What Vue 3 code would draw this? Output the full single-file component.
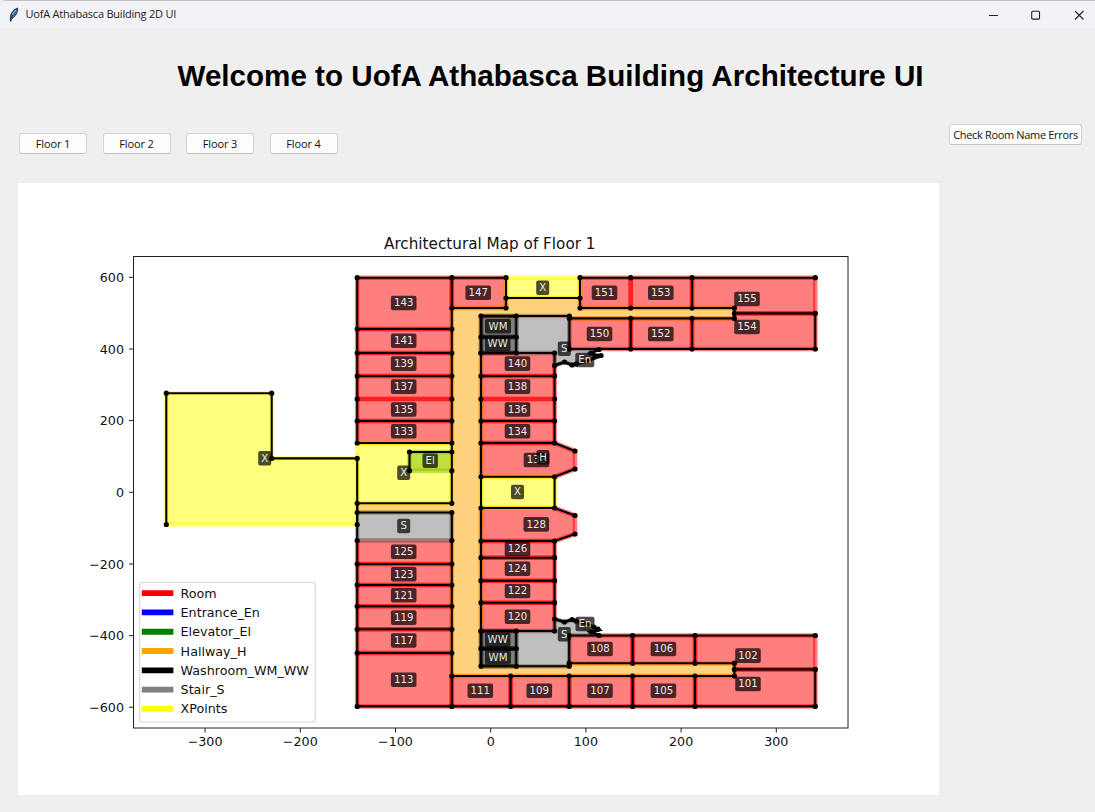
<script setup>
const floors = ['Floor 1', 'Floor 2', 'Floor 3', 'Floor 4']
const rect = (x1, y1, x2, y2) => `${x1},${y1} ${x2},${y1} ${x2},${y2} ${x1},${y2}`
const L = 357.2, M = 451.8, A = 481, B = 554.6

const stack = (x1, x2, ys) => ys.slice(1).map((y, i) => rect(x1, ys[i], x2, y))
const row = (y1, y2, xs) => xs.slice(1).map((x, i) => rect(xs[i], y1, x, y2))

const rooms = [
  ...stack(L, M, [277.7, 329, 353, 376, 399, 421, 443]),
  ...stack(L, M, [540.5, 564, 585, 606.3, 629.3, 653, 706.4]),
  ...stack(A, B, [353, 376, 399, 421, 443]),
  ...stack(A, B, [541, 557.7, 580.7, 602.7, 631]),
  rect(M, 277.7, 506, 308),
  ...row(277.7, 308, [580, 630.7, 692]),
  ...row(318.4, 349, [569.4, 630.7, 692]),
  '692,277.7 815.3,277.7 815.3,313.4 734.4,313.4 734.4,308 692,308',
  '692,318.4 734.4,318.4 734.4,313.4 815.3,313.4 815.3,349 692,349',
  `${A},443 ${B},443 575,451 575,469 ${B},476.8 ${A},476.8`,
  `${A},508 ${B},508 575,515.5 575,534 ${B},541 ${A},541`,
  ...row(635.5, 663.2, [569.2, 632.6, 695]),
  ...row(676, 706.4, [M, 510.6, 569.2, 632.6, 695]),
  '695,635.5 815.3,635.5 815.3,669.4 734.4,669.4 734.4,663.2 695,663.2',
  '695,676 734.4,676 734.4,669.4 815.3,669.4 815.3,706.4 695,706.4',
]
const areas = [
  ...rooms.map(p => ({ c: 'red', p })),
  { c: 'green', p: rect(409.5, 452, M, 470.8) },
  { c: 'orange', p: `${M},308 506,308 506,298 580,298 580,308 734.4,308 734.4,318.4 569.4,318.4 569.4,316 ${A},316 ${A},666.2 569.2,666.2 569.2,663.2 734.4,663.2 734.4,676 ${M},676 ${M},512.5 ${L},512.5 ${L},503.3 ${M},503.3` },
  { c: 'black', p: rect(A, 316, 516.3, 337) },
  { c: 'black', p: rect(A, 337, 516.3, 353) },
  { c: 'black', p: rect(A, 631, 516.3, 648.6) },
  { c: 'black', p: rect(A, 648.6, 516.3, 666.2) },
  { c: 'gray', p: rect(L, 512.5, M, 540.5) },
  { c: 'gray', p: `516.3,316 569.4,316 569.4,349 599,349 591,352 584,359 573,365 564.5,362 ${B},365.5 ${B},353 516.3,353` },
  { c: 'gray', p: `516.3,666.2 569.2,666.2 569.2,635.5 599,635.5 591,632 582,624 572,620 564.5,622 ${B},619 ${B},631 516.3,631` },
  { c: 'yellow', p: `166.3,393.2 271.7,393.2 271.7,458.4 ${L},458.4 ${L},524.5 166.3,524.5` },
  { c: 'yellow', p: rect(L, 443, M, 503.3) },
  { c: 'yellow', p: rect(506, 277.7, 580, 298) },
  { c: 'yellow', p: rect(A, 476.8, B, 508) },
]

const walls = [
  `166.3,524.5 166.3,393.2 271.7,393.2 271.7,458.4 ${L},458.4 ${L},524.5`,
  `${L},277.7 506,277.7 506,308 ${M},308`, `${L},277.7 ${L},443`, `${L},503.3 ${L},706.4 815.3,706.4 815.3,669.4`,
  `${M},277.7 ${M},503.3`, `${M},512.5 ${M},706.4`,
  ...[329, 353, 376, 421, 443, 503.3, 512.5, 564, 585, 606.3, 629.3, 653].map(y => `${L},${y} ${M},${y}`),
  `${M},452 409.5,452 409.5,470.8`,
  '506,298 580,298', '580,308 580,277.7 815.3,277.7', '580,308 734.4,308 734.4,318.4 569.4,318.4', '692,277.7 692,308',
  '734.4,313.4 815.3,313.4 815.3,349 569.4,349', '692,318.4 692,349', '630.7,318.4 630.7,349',
  `569.4,349 569.4,316 ${A},316 ${A},666.2 569.2,666.2 569.2,635.5`,
  '516.3,316 516.3,353', '516.3,631 516.3,666.2', `${A},337 516.3,337`, `${A},648.6 516.3,648.6`,
  ...[353, 376, 421, 443, 476.8, 508, 541, 557.7, 580.7, 602.7, 631].map(y => `${A},${y} ${B},${y}`),
  `${B},353 ${B},443 575,451`, `575,469 ${B},476.8 ${B},508 575,515.5`, `575,534 ${B},541 ${B},631`,
  '569.2,635.5 815.3,635.5', '569.2,663.2 734.4,663.2 734.4,676', '734.4,669.4 815.3,669.4', `${M},676 734.4,676`,
  '632.6,635.5 632.6,663.2', '695,635.5 695,663.2', ...[510.6, 569.2, 632.6, 695].map(x => `${x},676 ${x},706.4`),
]
const jagged = [
  `${B},365.5 564.5,362 572,365 578,363.5 588,361 598,356 591,353 599,349.5`,
  `${B},619 564.5,622 572,619.5 577,621 588,624 599,630 591,632 599,635.5`,
]
const grid = (xs, ys) => xs.flatMap(x => ys.map(y => [x, y]))
const dots = [
  ...grid([L, M], [277.7, 329, 353, 376, 399, 421, 443, 503.3, 512.5, 540.5, 564, 585, 606.3, 629.3, 653, 706.4]),
  ...grid([A, B], [353, 376, 399, 421, 443, 476.8, 508, 541, 557.7, 580.7, 602.7, 631]),
  ...grid([A, 516.3], [316, 337, 353, 631, 648.6, 666.2]),
  ...grid([506, 580], [277.7, 298, 308]),
  ...grid([630.7, 692], [277.7, 308, 318.4, 349]),
  ...grid([734.4], [308, 313.4, 318.4, 663.2, 669.4, 676]),
  ...grid([815.3], [277.7, 313.4, 349, 635.5, 669.4, 706.4]),
  ...grid([632.6, 695], [635.5, 663.2, 676, 706.4]),
  ...grid([510.6, 569.2], [676, 706.4]),
  ...grid([575], [451, 469, 515.5, 534]),
  [M, 308], [M, 676], [M, 452], [M, 470.8], [409.5, 452], [409.5, 470.8],
  [569.4, 316], [569.4, 318.4], [569.4, 349], [569.2, 635.5], [569.2, 663.2], [569.2, 666.2],
  [166.3, 393.2], [271.7, 393.2], [271.7, 458.4], [L, 458.4], [L, 524.5], [166.3, 524.5],
  [B, 365.5], [564.5, 362], [572, 365], [576, 364], [591, 353], [599, 349.5], [595, 357], [598, 356], [601, 355.5],
  [B, 619], [564.5, 622], [572, 619.5], [576, 621], [594, 627], [598, 629], [591, 632], [599, 635.5],
]

const labels = [
  ['143', 403.7, 303], ['141', 403.7, 340.7], ['139', 403.7, 363.6], ['137', 403.7, 386.6], ['135', 403.7, 409.5], ['133', 403.7, 431.3],
  ['125', 403.7, 551.7], ['123', 403.7, 574.3], ['121', 403.7, 595.3], ['119', 403.7, 617.6], ['117', 403.7, 640.5], ['113', 403.7, 679.7],
  ['147', 478.2, 292.7], ['151', 604.5, 292.7], ['153', 660.8, 292.7], ['155', 747, 299], ['154', 747, 327],
  ['150', 599.5, 334], ['152', 660.8, 334],
  ['140', 517.5, 363.6], ['138', 517.5, 386.6], ['136', 517.5, 409.5], ['134', 517.5, 431.3],
  ['132', 536.5, 460], ['128', 536.3, 524.4], ['126', 517.5, 549], ['124', 517.5, 568.8], ['122', 517.5, 591], ['120', 517.5, 616.8],
  ['108', 600, 649], ['106', 663.4, 649], ['102', 748, 655.6], ['101', 748, 684],
  ['111', 480.3, 690.7], ['109', 539.3, 690.7], ['107', 600, 690.7], ['105', 663.4, 690.7],
  ['WM', 498, 326.2], ['WW', 497.7, 344], ['WW', 497.7, 639.7], ['WM', 498, 657.2],
  ['X', 264.7, 458.3], ['X', 403.7, 472.8], ['X', 542.7, 287.7], ['X', 517.5, 492],
  ['S', 403.7, 526], ['S', 564.3, 348.8], ['S', 564.3, 634.3], ['El', 430.2, 460.7], ['H', 543, 457.3], ['En', 584.8, 360], ['En', 585, 624],
].map(([t, x, y]) => ({ t, x, y, w: t.length === 3 ? 25.6 : t === 'WM' ? 26 : t === 'WW' ? 25.5 : t === 'En' ? 19 : t === 'El' ? 15.4 : 13 }))

const xTicks = [-300, -200, -100, 0, 100, 200, 300].map(v => ({ x: 490.7 + v * 0.952, t: String(v).replace('-', '−') }))
const yTicks = [600, 400, 200, 0, -200, -400, -600].map(v => ({ y: 492.3 - v * 0.3583, t: String(v).replace('-', '−') }))
const legend = [['red', 'Room'], ['blue', 'Entrance_En'], ['green', 'Elevator_El'], ['orange', 'Hallway_H'], ['black', 'Washroom_WM_WW'], ['gray', 'Stair_S'], ['yellow', 'XPoints']]
</script>

<template>
  <div class="window">
    <header class="titlebar">
      <svg class="feather" width="12" height="16" viewBox="0 0 12 16">
        <path d="M2.5 13.5C1.5 8.5 4 3 9.6 1C10.3 4.5 8 9.5 4 11.5Z" fill="#3c6b9e" stroke="#20262e" stroke-width=".8" />
        <path d="M2.8 15C3.2 10 5 6 8.6 2" fill="none" stroke="#172333" stroke-width=".8" />
        <path d="M4.5 7.5L7.8 3" stroke="#8fbce0" stroke-width="1.1" />
      </svg>
      <span class="caption">UofA Athabasca Building 2D UI</span>
      <svg class="controls" width="98" height="12" viewBox="0 0 98 12" fill="none" stroke="#222" stroke-width="1.1">
        <path d="M1 6.5H10" /><rect x="43.7" y="2.3" width="7.8" height="7.8" rx="1" /><path d="M87 2L95.5 10.5M95.5 2L87 10.5" />
      </svg>
    </header>
    <h1>Welcome to UofA Athabasca Building Architecture UI</h1>
    <nav class="toolbar">
      <div class="floors"><button v-for="f in floors" :key="f">{{ f }}</button></div>
      <button class="check">Check Room Name Errors</button>
    </nav>
    <main class="figure">
      <svg width="921" height="612" viewBox="18 183 921 612">
        <text class="title" x="384" y="248.7" textLength="211.5" lengthAdjust="spacingAndGlyphs">Architectural Map of Floor 1</text>
        <g class="areas"><polygon v-for="(a, i) in areas" :key="i" :points="a.p" :fill="a.c" :stroke="a.c" /></g>
        <g class="walls"><polyline v-for="(w, i) in walls" :key="i" :points="w" /></g>
        <g class="jagged"><polyline v-for="(w, i) in jagged" :key="i" :points="w" /></g>
        <circle v-for="(d, i) in dots" :key="i" :cx="d[0]" :cy="d[1]" r="2.6" />
        <rect class="axes" x="133.5" y="256.5" width="714.5" height="471.5" />
        <g class="ticks">
          <g v-for="t in xTicks" :key="t.t"><path :d="`M${t.x} 728v4.5`" /><text :x="t.x" y="746.3" text-anchor="middle">{{ t.t }}</text></g>
          <g v-for="t in yTicks" :key="t.t"><path :d="`M133.5 ${t.y}h-4.5`" /><text x="124" :y="t.y + 4.7" text-anchor="end">{{ t.t }}</text></g>
        </g>
        <g class="labels">
          <g v-for="(l, i) in labels" :key="i"><rect :x="l.x - l.w / 2" :y="l.y - 7.3" :width="l.w" height="14.6" rx="2" /><text :x="l.x" :y="l.y + 3.3" text-anchor="middle">{{ l.t }}</text></g>
        </g>
        <g class="legend">
          <rect class="frame" x="139.7" y="582.5" width="175.5" height="139.5" rx="2.5" />
          <g v-for="(l, i) in legend" :key="l[1]"><path :d="`M141.8 ${593.2 + i * 19.27}h31.6`" :stroke="l[0]" /><text x="180.6" :y="597.8 + i * 19.27">{{ l[1] }}</text></g>
        </g>
      </svg>
    </main>
  </div>
</template>

<style>
html, body { margin: 0; background: #efefef; overflow: hidden; }
</style>
<style scoped>
.window { box-sizing: border-box; width: 1095px; height: 812px; background: #efefef; border-top: 1px solid #bfc0c4; border-radius: 6px 0 0 0; overflow: hidden; font-family: "Open Sans", "Noto Sans", sans-serif; }
.titlebar { height: 27px; background: #f2f3f6; display: flex; align-items: center; padding: 0 9px 0 8px; }
.feather { margin-right: 5.5px; }
.caption { font-size: 11px; line-height: 16px; color: #222; letter-spacing: -0.22px; white-space: nowrap; position: relative; top: -0.5px; }
.controls { margin-left: auto; }
h1 { margin: 26px 0 0 177.5px; height: 44px; font: bold 29.6px/44px "Liberation Sans", Arial, sans-serif; color: #000; white-space: nowrap; }
.toolbar { display: flex; justify-content: space-between; align-items: flex-start; padding: 26px 13px 0 19px; height: 59px; box-sizing: border-box; }
.floors { display: flex; gap: 15.5px; padding-top: 9px; }
button { box-sizing: border-box; width: 68px; height: 21px; padding: 0; border: 1px solid #d3d3d3; border-bottom-color: #c3c3c3; border-radius: 3px; background: #fdfdfd; color: #111; font: 11px/18px "Open Sans", "Noto Sans", sans-serif; white-space: nowrap; }
.floors button { letter-spacing: -0.1px; }
.check { width: 133px; letter-spacing: -0.33px; }
.figure { margin: 26px 0 0 18px; width: 921px; height: 612px; background: #fff; }
.figure svg { display: block; font-family: "DejaVu Sans", sans-serif; }
.title { font-size: 15.8px; fill: #111; }
.areas { fill-opacity: .5; stroke-opacity: .5; stroke-width: 4.6; stroke-linejoin: round; }
.walls, .jagged { fill: none; stroke: #000; stroke-width: 2.1; }
.jagged { stroke-width: 3; }
.axes { fill: none; stroke: #222; stroke-width: 1; }
.ticks path { stroke: #222; stroke-width: 1; }
.ticks text, .legend text { font-size: 12.7px; fill: #111; }
.labels rect { fill: #000; fill-opacity: .7; }
.labels text { font-size: 10.2px; fill: #fff; fill-opacity: .92; }
.legend path { stroke-width: 5.8; }
.frame { fill: #fff; fill-opacity: .8; stroke: #d5d5d5; stroke-width: 1.1; }
</style>
